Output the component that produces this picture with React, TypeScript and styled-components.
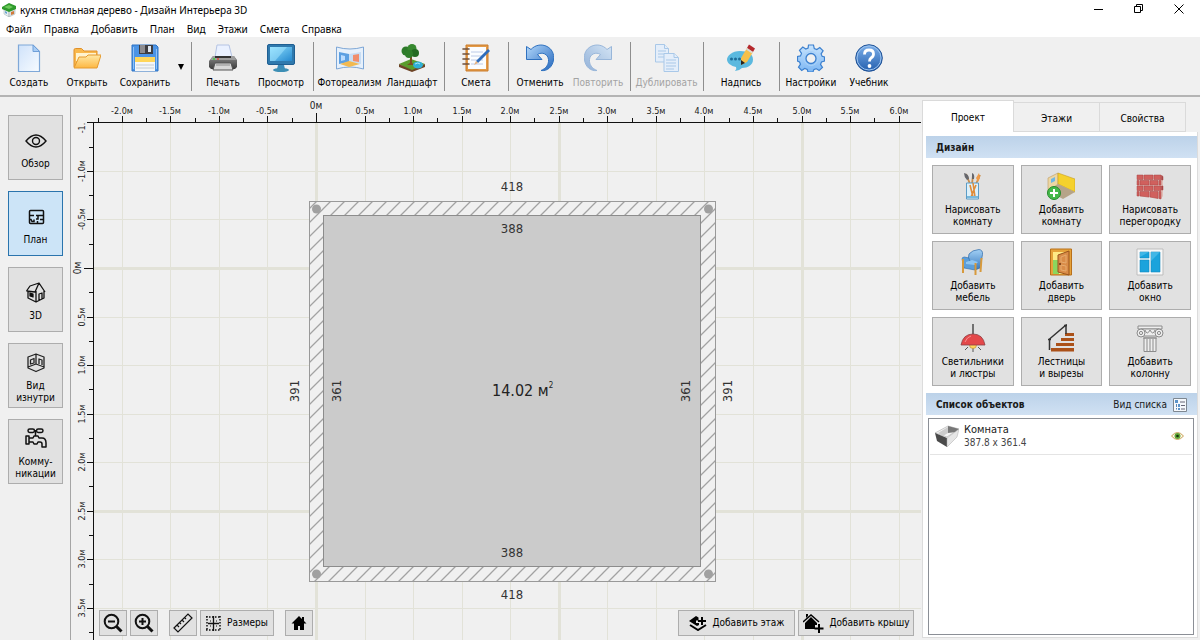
import React from "react";
import styled, { createGlobalStyle, css } from "styled-components";

const GlobalStyle = createGlobalStyle`
  *, *::before, *::after { box-sizing: border-box; }
  body { margin: 0; background: #f0f0f0; }
  button, input, select { font: inherit; color: inherit; }
`;

const uiFont = `"DejaVu Sans Condensed", Tahoma, "DejaVu Sans", sans-serif`;
const titleFont = `"Noto Sans", "Segoe UI", sans-serif`;

/* ---------- window frame ---------- */

const Window = styled.div`
  display: flex;
  flex-direction: column;
  min-height: 100vh;
  background: #f0f0f0;
  color: #1a1a1a;
  font-family: ${uiFont};
  font-size: 10px;
  line-height: 12px;
`;

const TitleBar = styled.header`
  display: flex;
  align-items: center;
  height: 20px;
  padding-left: 2px;
  gap: 4px;
  background: #fff;
  font-family: ${titleFont};
  color: #000;
`;

const Title = styled.h1`
  flex: 1;
  margin: 0;
  font-size: 10px;
  font-weight: 400;
`;

const WindowButton = styled.button`
  display: grid;
  place-items: center;
  width: 40px;
  height: 18px;
  padding: 0;
  border: 0;
  background: none;
`;

const WindowButtons = styled.div`
  display: flex;
  align-self: flex-start;
  padding-right: 1px;
`;

const MenuBar = styled.nav`
  display: flex;
  gap: 12px;
  height: 17px;
  padding: 0 6px;
  background: #fff;
  font-family: ${titleFont};
  font-size: 10px;
  line-height: 18px;
`;

const MenuItem = styled.button`
  padding: 0;
  border: 0;
  background: none;
  color: #000;
`;

/* ---------- main toolbar ---------- */

const Toolbar = styled.div`
  display: flex;
  height: 60px;
  padding: 5px 0 4px;
  border-bottom: 2px solid #b4b4b4;
`;

const toolWidths = { s: 58, m: 67, l: 70 };

const ToolButton = styled.button<{ $size: "s" | "m" | "l" }>`
  display: flex;
  flex-direction: column;
  align-items: center;
  gap: 5px;
  flex: none;
  width: ${(p) => toolWidths[p.$size]}px;
  padding: 2px 0 0;
  border: 0;
  background: none;
  color: #000;
  white-space: nowrap;
  &:disabled {
    color: #a3a3a3;
  }
`;

const SaveArrow = styled.button`
  display: grid;
  place-items: center;
  width: 14px;
  padding: 0;
  border: 0;
  background: none;
`;

const Separator = styled.span`
  flex: none;
  width: 1px;
  margin: 0 2px 0 3px;
  background: #8e8e8e;
`;

/* ---------- body ---------- */

const Body = styled.div`
  display: flex;
  flex: 1;
`;

const face = css`
  border: 1px solid #adadad;
  background: #e1e1e1;
  color: #000;
`;

const ViewBar = styled.nav`
  display: flex;
  flex-direction: column;
  gap: 11px;
  flex: none;
  width: 71px;
  padding: 18px 8px;
  border-right: 1px solid #a5a5a5;
`;

const ViewButton = styled.button<{ $active?: boolean }>`
  ${face}
  display: flex;
  flex-direction: column;
  align-items: center;
  justify-content: center;
  gap: 5px;
  width: 55px;
  height: 65px;
  padding: 3px 0 0;
  ${(p) =>
    p.$active &&
    css`
      border-color: #2a74ad;
      background: #cce4f7;
    `}
`;

const Workspace = styled.main`
  position: relative;
  display: flex;
  flex: 1;
  flex-direction: column;
  justify-content: flex-end;
  min-width: 0;
  overflow: hidden;
`;

const Plan = styled.svg`
  position: absolute;
  inset: 0;
  width: 100%;
  height: 100%;
  font-family: ${uiFont};
`;

const BottomBar = styled.div`
  position: relative;
  display: flex;
  gap: 3px;
  padding: 0 7px 4px 28px;
`;

const BottomButton = styled.button<{ $width: number }>`
  ${face}
  display: flex;
  align-items: center;
  justify-content: center;
  gap: 6px;
  width: ${(p) => p.$width}px;
  height: 26px;
  padding: 0;
  white-space: nowrap;
`;

const Gap = styled.span<{ $grow?: boolean }>`
  flex: ${(p) => (p.$grow ? "1" : "0 0 5px")};
`;

/* ---------- right panel ---------- */

const SidePanel = styled.aside`
  display: flex;
  flex-direction: column;
  flex: none;
  width: 279px;
  padding: 3px 2px 2px 1px;
`;

const Tabs = styled.div`
  display: flex;
  align-items: flex-end;
`;

const Tab = styled.button<{ $active?: boolean }>`
  width: 86px;
  height: 30px;
  padding: 3px 0 0;
  border: 1px solid #dadada;
  border-left: 0;
  background: #f0f0f0;
  color: #000;
  ${(p) =>
    p.$active &&
    css`
      width: 92px;
      height: 32px;
      border-left: 1px solid #dadada;
      border-bottom: 0;
      background: #fff;
    `}
`;

const TabPage = styled.div`
  display: flex;
  flex: 1;
  flex-direction: column;
  padding: 4px 0 2px 3px;
  border: 1px solid #dcdcdc;
  border-top: 0;
  background: #fff;
`;

const SectionHeader = styled.div`
  display: flex;
  align-items: center;
  justify-content: space-between;
  height: 22px;
  padding: 1px 10px 0;
  background: linear-gradient(#bcd2e9, #d0e1f3);
`;

const SectionTitle = styled.h2`
  margin: 0;
  font-size: 10px;
  font-weight: 700;
`;

const ListView = styled.button`
  display: flex;
  align-items: center;
  gap: 6px;
  padding: 0;
  border: 0;
  background: none;
`;

const DesignGrid = styled.div`
  display: grid;
  grid-template-columns: repeat(3, 1fr);
  gap: 7px;
  padding: 7px 6px 7px 6px;
`;

const DesignButton = styled.button`
  ${face}
  display: flex;
  flex-direction: column;
  align-items: center;
  gap: 4px;
  height: 69px;
  padding: 6px 0 0;
  line-height: 12px;
`;

const Lines = styled.span`
  text-align: center;
  white-space: pre-line;
`;

const ObjectList = styled.ul`
  flex: 1;
  margin: 3px 3px 0 2px;
  padding: 0 1px;
  list-style: none;
  border: 1px solid #8b8f96;
  background: #fff;
`;

const ObjectItem = styled.li`
  display: flex;
  align-items: center;
  gap: 5px;
  height: 36px;
  padding: 0 8px 1px 5px;
  border-bottom: 1px solid #e4e4e4;
`;

const ObjectText = styled.div`
  flex: 1;
  line-height: 13px;
`;

const ObjectName = styled.div`
  font-size: 11px;
`;

const ObjectSize = styled.div`
  color: #444;
`;

/* ---------- icons ---------- */

const Svg = ({ size = 28, h, children }: { size?: number; h?: number; children: React.ReactNode }) => (
  <svg width={size} height={h ?? size} viewBox={`0 0 ${size} ${h ?? size}`} fill="none" aria-hidden="true">
    {children}
  </svg>
);

const Grad = ({ id, from, to, x2 = 0, y2 = 1 }: { id: string; from: string; to: string; x2?: number; y2?: number }) => (
  <linearGradient id={id} x1="0" y1="0" x2={x2} y2={y2}>
    <stop offset="0" stopColor={from} />
    <stop offset="1" stopColor={to} />
  </linearGradient>
);

const LogoIcon = () => (
  <Svg size={14}>
    <path d="M2 6l5 2v6l-5-3z" fill="#e8eef2" stroke="#9aa" strokeWidth=".5" />
    <path d="M7 8l6-2v5l-6 3z" fill="#d9dfe4" stroke="#9aa" strokeWidth=".5" />
    <path d="M0 4l7-4 7 3v3L7 9 0 6z" fill="#2f9a2c" />
    <path d="M2 4l5-2 4 2-4 2z" fill="#6cc95a" />
    <path d="M9 9l3-1v3l-3 1z" fill="#d27a3a" />
    <path d="M3 8l2 1v2l-2-1z" fill="#6aa5cf" />
  </Svg>
);

const NewIcon = () => (
  <Svg>
    <defs><Grad id="page" from="#cfe2fa" to="#f7fbff" x2={1} /></defs>
    <path d="M3.500 1h14.500l6.500 6.500V27.500h-21z" fill="url(#page)" stroke="#7fa8d8" strokeWidth="1.200" />
    <path d="M18 1v6.500h6.500z" fill="#a9cdf5" stroke="#6f9fd8" />
  </Svg>
);

const OpenIcon = () => (
  <Svg>
    <defs><Grad id="folder" from="#ffe9a6" to="#fdb742" /></defs>
    <path d="M1 23V6q0-1.500 1.500-1.500h6L11 7h13v5" fill="#f9b84c" stroke="#e0902a" />
    <path d="M3 9h20v8H3z" fill="#fff3cf" />
    <path d="M1 24L6 13h7l2-2h13l-4 13z" fill="url(#folder)" stroke="#e59a2e" />
  </Svg>
);

const SaveIcon = () => (
  <Svg>
    <path d="M1 1h24l2 2v24H1z" fill="#4b94e6" stroke="#2d72c4" />
    <path d="M8 1h14v9H8z" fill="#3e3e42" />
    <path d="M9 1h5v8H9z" fill="#8c8c90" />
    <path d="M17 2h3v6h-3z" fill="#dfe7f0" />
    <path d="M4 13h20v14H4z" fill="#f4f6f8" />
    <path d="M4 13h20v5H4z" fill="#ffd65a" />
    <path d="M5 21h18M5 24h18" stroke="#c4ccd4" />
    <path d="M2.500 3v22M25.500 5v20" stroke="#8fc1f7" />
  </Svg>
);

const PrintIcon = () => (
  <Svg>
    <defs><Grad id="prn" from="#8a8a8a" to="#3d3d3d" /></defs>
    <path d="M6 13L8 1h12l3 12z" fill="#eaf1ff" stroke="#b5c4e4" />
    <path d="M4 12h21l3 4v7l-2 2H2l-2-2v-6z" fill="url(#prn)" />
    <path d="M4 12h21l2 4H1z" fill="#9d9d9d" />
    <path d="M6 12h16v2H6z" fill="#333" />
    <path d="M6 19h16l2 7H4z" fill="#d8d8d8" stroke="#555" />
    <path d="M7 21h14" stroke="#8d8d8d" />
    <circle cx="5" cy="15" r="1" fill="#3ed23e" /><circle cx="9" cy="15" r="1" fill="#e14a3c" />
  </Svg>
);

const MonitorIcon = () => (
  <Svg>
    <defs><Grad id="screen" from="#8fe0ff" to="#2589cf" x2={1} /></defs>
    <rect x=".5" y=".5" width="27" height="20" rx="1.500" fill="#2f79ad" stroke="#1f5f92" />
    <path d="M3 3h22v14H3z" fill="url(#screen)" />
    <path d="M3 3h17L8 17H3z" fill="#a8e8ff" opacity=".5" />
    <path d="M11 21h6l1 4h-8z" fill="#3b8cbb" />
    <ellipse cx="14" cy="26" rx="8" ry="2" fill="#3d8fb5" />
  </Svg>
);

const PhotoIcon = () => (
  <Svg>
    <path d="M.500 3q13.500 4 27 0v22q-13.500-4-27 0z" fill="#e6f0fb" stroke="#7ea7d6" />
    <path d="M3 8l10 2v8L3 20z" fill="#5b9fe2" />
    <path d="M5 11l4 1v4l-4 1z" fill="#b9dbff" />
    <path d="M13 10l12-2v12l-12-2z" fill="#c7ddf4" />
    <path d="M17 11l6-1v8l-6-1z" fill="#f08d6c" />
    <path d="M4 20l9-3 11 3-11 3z" fill="#f2b950" />
  </Svg>
);

const TreeIcon = () => (
  <Svg>
    <path d="M1 20l12-5 14 5-13 7z" fill="#5a9c2b" />
    <path d="M1 20l13 6v2L1 23zM27 20l-13 6v2l13-5z" fill="#6d4426" />
    <path d="M10 9l2 3v7l-3 2h8l-3-2v-7l2-4z" fill="#7a4b24" />
    <circle cx="8" cy="7" r="4.500" fill="#2d7a2a" /><circle cx="14" cy="4.500" r="4.500" fill="#37892f" />
    <circle cx="17" cy="9" r="4" fill="#256b24" /><circle cx="11" cy="10" r="4" fill="#2e7d2a" />
    <ellipse cx="20" cy="21" rx="5" ry="3.500" fill="#2fb0d8" /><path d="M17 20q3-2 5 0" stroke="#a5e5f7" />
  </Svg>
);

const EstimateIcon = () => (
  <Svg>
    <path d="M4 1h22v26H4z" fill="#e39a48" stroke="#cb7c2a" />
    <path d="M6 3h18v22H6z" fill="#fbfdff" />
    <path d="M9 8h12M9 12h12M9 16h12M9 20h12" stroke="#bccbe8" />
    <path d="M1 5h6M1 10h6M1 15h6M1 20h6" stroke="#70503a" strokeWidth="1.600" strokeLinecap="round" />
    <path d="M26 5l2 2-12 12-2-2z" fill="#2f6dbb" /><path d="M14 17l2 2-4 2z" fill="#e9b27c" />
  </Svg>
);

const UndoIcon = ({ mirror }: { mirror?: boolean }) => (
  <Svg>
    <defs><Grad id="undo" from="#b3d8fb" to="#2467bd" x2={1} /></defs>
    <g transform={mirror ? "translate(28 0) scale(-1 1)" : undefined} opacity={mirror ? 0.45 : 1}>
      <path
        d="M.5 2.500L5 5.500C9 1 15 0 20 2c6 2.500 8.500 8 7.500 14C26.500 23 21 27.500 15 26.500c5-2 8-6 7.500-11C22 10 16 7.500 11.500 10.500L16 15.500H.5z"
        fill="url(#undo)" stroke="#2f71bf" strokeLinejoin="round"
      />
    </g>
  </Svg>
);

const CopyIcon = () => (
  <Svg>
    <g fill="#e4eefa" stroke="#a9c8e8">
      <path d="M2.500.500h9l4 4V18h-13z" /><path d="M11.500.500v4h4" /><path d="M5 7h8M5 10h8M5 13h6" />
      <path d="M11 9.500h10l4.500 4V27.500H11z" /><path d="M21 9.500v4h4" /><path d="M13 16h10M13 19h10M13 22h10M13 25h8" />
    </g>
  </Svg>
);

const NoteIcon = () => (
  <Svg>
    <path d="M13 7c8 0 13 3 13 8.500S21 24 15 24q-3 3-7 3 2-2 1-4C4 22 0 19 0 15.500S5 7 13 7z" fill="#5bb9df" />
    <circle cx="4.500" cy="15" r="1.500" fill="#1d6c98" /><circle cx="8.500" cy="15" r="1.500" fill="#1d6c98" /><circle cx="12.500" cy="15" r="1.500" fill="#1d6c98" />
    <path d="M20 4l6 4-6 10-6 3v-7z" fill="#f6c04a" /><path d="M20 4l2-3.500 6 4L26 8z" fill="#b5292d" />
    <path d="M20 4l6 4-1 1.500-6-4z" fill="#d9d9d9" /><path d="M14 16v5l4-2z" fill="#222" />
  </Svg>
);

const GearIcon = () => (
  <Svg>
    <defs><Grad id="gear" from="#c8e4fd" to="#7cb6f3" /></defs>
    <path
      d="M11.500 1h5l.8 3.600 2.500 1 3-2 3.300 3.300-2 3 1 2.400L27.500 13v4l-3 1-1 2.400 2 3-3.400 3.200-3-2-2.300 1-.8 2.400h-5l-.8-2.600-2.500-1-3 2-3.200-3.200 2-3-1-2.300L.5 17v-4.500l3-.6 1-2.500-2-3L5.800 3l3 2 2.300-1z"
      fill="url(#gear)" stroke="#3c80cf" strokeWidth="1.200"
    />
    <circle cx="14" cy="14.500" r="7" stroke="#a9d1f8" /><circle cx="14" cy="14.500" r="5" fill="#f0f0f0" stroke="#3c80cf" strokeWidth="1.300" />
  </Svg>
);

const HelpIcon = () => (
  <Svg>
    <defs><Grad id="help" from="#7db0ea" to="#245fae" /></defs>
    <circle cx="14" cy="14" r="13.300" fill="url(#help)" stroke="#205296" />
    <circle cx="14" cy="14" r="12" stroke="#9cc3ee" />
    <path d="M9.500 10.500q0-4.500 4.500-4.500t4.500 4q0 2.500-2.500 4-1.500 1-1.500 3.500" stroke="#fff" strokeWidth="2.800" />
    <circle cx="14.500" cy="22" r="1.900" fill="#fff" />
  </Svg>
);

const EyeOutline = () => (
  <Svg size={24}>
    <g stroke="#111" strokeWidth="1.400">
      <path d="M2 12q10-12 20 0-10 12-20 0z" /><circle cx="12" cy="12" r="3.500" />
    </g>
  </Svg>
);

const PlanIcon = () => (
  <Svg size={24}>
    <g stroke="#111" strokeWidth="1.500">
      <rect x="5.500" y="5.500" width="14" height="13" rx="1" />
      <path d="M5 10.500h5M12 10.500h7M14 10v4h-2M5 14.500h2l1 2h2v-2M13.500 16v3M16 14.500h3" />
    </g>
  </Svg>
);

const HouseIcon = () => (
  <Svg size={24}>
    <g stroke="#111" strokeWidth="1.300" strokeLinejoin="round">
      <path d="M2.500 10L6 5l9-3 6 9M15 2l-4 9-8.500-1M4 10v7l8 4V10M12 21l8-4V10M15 19v-6l3-1v6" />
      <path d="M6 12v3l3 1v-3z" fill="#111" />
    </g>
  </Svg>
);

const InsideIcon = () => (
  <Svg size={24}>
    <g stroke="#222" strokeWidth="1.300" strokeLinejoin="round">
      <path d="M4 6l8-3 8 3v11l-8 3.500L4 17zM4 16l8-3 8 3M12 3v10M6.500 9l3.500-1.500v4.500l-3.500 1zM15 13V8l3 1v5" />
    </g>
  </Svg>
);

const TapIcon = () => (
  <Svg size={24}>
    <g stroke="#111" strokeWidth="1.500" strokeLinejoin="round">
      <rect x="4" y="2" width="6.500" height="3.500" rx="1.700" /><rect x="12.500" y="2" width="6.500" height="3.500" rx="1.700" />
      <path d="M11.500 3v6M2 9h3v8H2zM5 11h4l1-2h4l1 2h3q4 0 4 5v4h-4v-3q0-2-2-2h-2l-1 2h-3l-1-2H5" />
    </g>
  </Svg>
);

const ZoomIcon = ({ plus }: { plus?: boolean }) => (
  <Svg size={20}>
    <g stroke="#111">
      <circle cx="8.500" cy="8.500" r="6.800" strokeWidth="2" /><path d="M13.500 13.500l5 5" strokeWidth="3" />
      <path d={plus ? "M5 8.500h7M8.500 5v7" : "M5 8.500h7"} strokeWidth="2" />
    </g>
  </Svg>
);

const RulerIcon = () => (
  <Svg size={20}>
    <path d="M1 15L15 1l4 4L5 19zM4 12l2 2M6.500 9.500l1.500 1.500M9 7l2 2M11.500 4.500L13 6" stroke="#111" strokeWidth="1.200" />
  </Svg>
);

const SizesIcon = () => (
  <Svg size={15}>
    <path d="M0 1h15M0 14h15M1 0v15M14 0v15" stroke="#111" strokeWidth="1.500" strokeDasharray="1.500 1.500" />
    <path d="M7.500 0v15M2 7.500h11" stroke="#111" strokeWidth="1.300" />
    <path d="M4 5h7M4 10h7" stroke="#111" strokeDasharray="1 2" />
  </Svg>
);

const HomeIcon = () => (
  <Svg size={16}>
    <path d="M8 1L.5 8.500H3V15h4v-4h2v4h4V8.500h2.500L13 6V2h-2v2z" fill="#000" />
  </Svg>
);

const FloorIcon = () => (
  <Svg size={18} h={16}>
    <path d="M0 6l7-5 2.500 1.500v3H7v2.500h3v2L8 11z" fill="#000" />
    <path d="M13 2v8M9 6h8" stroke="#000" strokeWidth="2" /><path d="M1 10l8 5 8-5" stroke="#000" strokeWidth="2" />
  </Svg>
);

const RoofIcon = () => (
  <Svg size={21} h={20}>
    <path d="M0 9l8-7 8 7" stroke="#000" strokeWidth="1.500" /><path d="M3 5V1h2v2z" fill="#000" />
    <path d="M8 4l6 6v2h-2v4H2v-6z" fill="#000" /><path d="M16 11v9M11.500 15.500h9" stroke="#000" strokeWidth="2" />
  </Svg>
);

const BrushesIcon = () => (
  <Svg>
    <path d="M11 12L7 2M13 12l1-9M17 12l4-9" stroke="#c98c4a" strokeWidth="1.800" />
    <path d="M5 1q5 1 5 6l-2 1q-3-3-3-7zM13 1q3 1 2 6h-2z" fill="#65666b" /><path d="M17 6l3-5 1 5-2 4z" fill="#ef9a48" />
    <path d="M7.500 11h12v16h-12z" fill="#dcf0fa" stroke="#5b9cc6" />
    <path d="M11 13l3 12M17 13l-5 12M14 11l2 14" stroke="#df8c3a" strokeWidth="1.600" />
    <path d="M8 24h11v2H8z" fill="#79b9dc" />
  </Svg>
);

const AddRoomIcon = () => (
  <Svg>
    <path d="M1 6l10-5v11L1 20z" fill="#ecd6a4" stroke="#bf9a5b" strokeWidth=".6" />
    <path d="M11 1l17 6v13l-17-8z" fill="#f5d12d" stroke="#c89e1f" strokeWidth=".6" />
    <path d="M11 12l17 8-12 7L1 19z" fill="#b6a488" /><path d="M4 7l4-2v4l-4 2z" fill="#6fb6e4" />
    <circle cx="7" cy="21" r="6.500" fill="#45b94a" stroke="#248b2c" /><path d="M7 17v8M3 21h8" stroke="#fff" strokeWidth="2" />
  </Svg>
);

const BrickIcon = () => (
  <Svg>
    <path d="M1 3h24v24L1 24zM25 3l2 1v20l-2 3z" fill="#e0bdb6" />
    <g fill="#d0605d" stroke="#a94544" strokeWidth=".5">
      <path d="M1 3h6v4.500H1zM8 3h9v4.500H8zM18 3h7v4.500h-7z" />
      <path d="M1 8.500h2v4.500H1zM4 8.500h9v4.500H4zM14 8.500h8v4.500h-8zM23 8.500h2v4.500h-2z" />
      <path d="M1 14h6v4.500H1zM8 14h9v4.500H8zM18 14h7v4.500h-7z" />
      <path d="M1 19.500h2V24H1zM4 19.500h9V25l-9-1zM14 19.500h8v7l-8-1.500zM23 19.500h2V27l-2-.5z" />
      <path d="M25.500 3.500l1.500 1v3.500l-1.500 0zM25.500 14h1.500v4h-1.500z" fill="#a84545" />
    </g>
  </Svg>
);

const ChairIcon = () => (
  <Svg>
    <defs><Grad id="chair" from="#a2d0f5" to="#3577bd" /></defs>
    <path d="M10 6q3-4 10-4.500 4 .5 3.500 5L21 20l-5 2-2-8-5-2z" fill="url(#chair)" stroke="#2d69a8" strokeWidth=".7" />
    <path d="M3 11q0-2 2.500-2L10 10l1 5 5 1v6L5 20z" fill="#5c9fdb" stroke="#2d69a8" strokeWidth=".6" />
    <path d="M7 14l6-2 6 2-3 3-9-1z" fill="#8fc6f2" />
    <path d="M4 11v14M16.500 15v12M22.500 10l-1 14" stroke="#d79a3d" strokeWidth="2" />
  </Svg>
);

const DoorIcon = () => (
  <Svg>
    <path d="M3.500 1h21v26h-21z" fill="#e6a23a" stroke="#b8701b" /><path d="M6 4h15v22H6z" fill="#ffe985" />
    <path d="M6 12h6v14H6z" fill="#8bd65e" /><path d="M11 7l11-4v24l-11-3z" fill="#d98c48" stroke="#99531d" />
    <path d="M14 9l5-2v8l-5-1zM14 17l5 1v5l-5-1z" stroke="#e6ab6e" /><circle cx="13" cy="16" r="1" fill="#663312" />
  </Svg>
);

const WindowIcon = () => (
  <Svg>
    <path d="M1 1h26v26H1z" fill="#f8f8f8" stroke="#bdbdbd" />
    <path d="M4 4h9v6H4zM4 12h9v12H4zM15 4h9v20h-9z" fill="#1ba3dc" stroke="#158cc0" strokeWidth=".6" />
    <path d="M4 4h9L4 9zM15 4h9l-9 9z" fill="#5cc5ef" opacity=".6" />
  </Svg>
);

const LampIcon = () => (
  <Svg>
    <path d="M14 0v10" stroke="#555" strokeWidth="1.600" />
    <path d="M14 24v4M9 23l-3 3M19 23l3 3" stroke="#555" strokeWidth="1" />
    <circle cx="14" cy="21" r="3.500" fill="#ffd65c" stroke="#b58a36" strokeWidth=".6" />
    <path d="M2 21q2-11 12-11t12 11z" fill="#e4484a" stroke="#8c4044" strokeWidth=".8" /><path d="M6 18q2-5 6-6" stroke="#f49090" />
  </Svg>
);

const StairsIcon = () => (
  <Svg>
    <path d="M18 9h9v3h-9zM14 14h13v3H14zM9 19h18v3H9zM4 24h23v3.500H4z" fill="#ab5119" />
    <path d="M2.500 26V15L19 1v9M1 15.500h3M17 1.500h3" stroke="#333" strokeWidth="1.500" />
  </Svg>
);

const ColumnIcon = () => (
  <Svg>
    <g stroke="#8b8b8b" fill="#eee">
      <path d="M2 2h24v3H2z" /><path d="M8 14h12v13.500H8z" /><path d="M5 5h18v7H5z" />
      <circle cx="5" cy="9" r="4" /><circle cx="5" cy="9" r="1.600" /><circle cx="23" cy="9" r="4" /><circle cx="23" cy="9" r="1.600" />
      <path d="M9 6q2 6 5 0 3 6 5 0M7 14h14M11 15v12M14 15v12M17 15v12" />
    </g>
  </Svg>
);

const ListIcon = () => (
  <Svg size={14}>
    <path d="M.5.5h13v13H.5z" fill="#f5f8fc" stroke="#7d8791" />
    <path d="M3.500 4v7M3 7.500h3M3 11h3" stroke="#5b87b5" strokeDasharray="1 1" />
    <path d="M7 4h5M8 7.500h4M8 11h4" stroke="#667" /><path d="M2 2h3v3H2zM5 6h2v3H5zM5 10h2v2H5z" fill="#5b93c9" />
  </Svg>
);

const RoomIcon = () => (
  <Svg size={24}>
    <path d="M0 9l13-7 11 3-12 8z" fill="#f4f4f4" stroke="#999" strokeWidth=".5" />
    <path d="M13 2v7l8-1 3-3z" fill="#777" /><path d="M3 9l10-6v6l-5 3z" fill="#ccc" />
    <path d="M0 9l12 5v9L2 17z" fill="#4a4a4a" /><path d="M12 14L24 5l-2 8-10 10z" fill="#e6e6e6" stroke="#aaa" strokeWidth=".5" />
  </Svg>
);

const EyeIcon = () => (
  <Svg size={13} h={10}>
    <path d="M.500 5q6-7 12 0-6 7-12 0z" fill="#fff9e8" stroke="#c79f56" />
    <circle cx="6.500" cy="5" r="3" fill="#5fa536" /><circle cx="6.500" cy="5" r="1.300" fill="#16330c" />
  </Svg>
);

/* ---------- plan drawing ---------- */

const METRE = 97.1;
const ZERO_X = 245;
const ZERO_Y = 171;
const RULER_X = 22;
const RULER_Y = 25;

const posX = (m: number) => Math.round(ZERO_X + m * METRE);
const posY = (m: number) => Math.round(ZERO_Y + m * METRE);

/* Quarter-metre marks from `from` to `to`. */
const marks = (from: number, to: number) =>
  Array.from({ length: Math.round((to - from) * 4) + 1 }, (_, i) => from + i / 4);

const isHalf = (m: number) => Number.isInteger(m * 2);
const isBold = (m: number) => Number.isInteger(m / 2.5);
const label = (m: number) => (m === 0 ? "0м" : `${m.toFixed(1)}м`);
const tick = (m: number) => (m === 0 ? 9 : isHalf(m) ? 6 : 4);

const xMarks = marks(-2.25, 6);
const yMarks = marks(-1.5, 3.75);

const wall = { left: 238, top: 104, right: 644, bottom: 484, thick: 15 };
const corners = [
  [245, 112],
  [637, 112],
  [245, 477],
  [637, 477],
];

const FloorPlan = () => (
  <Plan role="img" aria-label="План комнаты">
    <defs>
      <pattern id="hatch" width="14" height="14" patternUnits="userSpaceOnUse">
        <path d="M-1 15L15-1M-1 1L1-1M13 15L15 13" stroke="#a2a2a2" strokeWidth="1.300" />
      </pattern>
    </defs>

    <g stroke="#e2e2d8">
      {xMarks.filter(isHalf).map((m) => (
        <line key={m} x1={posX(m) + 0.5} x2={posX(m) + 0.5} y1={RULER_Y} y2="100%" strokeWidth={isBold(m) ? 3 : 1} />
      ))}
      {yMarks.filter(isHalf).map((m) => (
        <line key={m} y1={posY(m) + 0.5} y2={posY(m) + 0.5} x1={RULER_X} x2="100%" strokeWidth={isBold(m) ? 3 : 1} />
      ))}
    </g>

    <g stroke="#111" shapeRendering="crispEdges">
      <line x1={RULER_X} x2="100%" y1={RULER_Y + 0.5} y2={RULER_Y + 0.5} />
      <line x1={RULER_X + 0.5} x2={RULER_X + 0.5} y1={RULER_Y} y2="100%" />
      {xMarks.map((m) => (
        <line key={m} x1={posX(m) + 0.5} x2={posX(m) + 0.5} y1={RULER_Y - tick(m)} y2={RULER_Y} />
      ))}
      {yMarks.map((m) => (
        <line key={m} y1={posY(m) + 0.5} y2={posY(m) + 0.5} x1={RULER_X - tick(m)} x2={RULER_X} />
      ))}
    </g>

    <g fill="#222" textAnchor="middle" fontSize="9">
      {xMarks.filter(isHalf).map((m) => (
        <text key={m} x={posX(m)} y={m === 0 ? 12 : 17} fontSize={m === 0 ? 10 : 9}>
          {label(m)}
        </text>
      ))}
      <text transform={`translate(14 ${RULER_Y + 6}) rotate(-90)`}>-1.</text>
      {yMarks
        .filter((m) => isHalf(m) && m > -1.5)
        .map((m) => (
          <text
            key={m}
            transform={`translate(${m === 0 ? 10 : 14} ${posY(m)}) rotate(-90)`}
            fontSize={m === 0 ? 10 : 9}
          >
            {label(m)}
          </text>
        ))}
    </g>

    <rect x={wall.left} y={wall.top} width={wall.right - wall.left} height={wall.bottom - wall.top} fill="#f0f0f0" />
    <rect
      x={wall.left + 0.5}
      y={wall.top + 0.5}
      width={wall.right - wall.left}
      height={wall.bottom - wall.top}
      fill="url(#hatch)"
      stroke="#999"
    />
    <rect
      x={wall.left + wall.thick - 0.5}
      y={wall.top + wall.thick - 0.5}
      width={wall.right - wall.left - 2 * wall.thick + 1}
      height={wall.bottom - wall.top - 2 * wall.thick + 1}
      fill="#cbcbcb"
      stroke="#8c8c8c"
    />
    {corners.map(([x, y]) => (
      <circle key={`${x}-${y}`} cx={x + 0.5} cy={y} r="4.500" fill="#a0a0a0" />
    ))}

    <g fill="#333" textAnchor="middle" fontSize="13">
      <text x="441" y="94">418</text>
      <text x="441" y="136">388</text>
      <text x="441" y="460">388</text>
      <text x="441" y="502">418</text>
      <text transform="translate(228 294) rotate(-90)">391</text>
      <text transform="translate(270 294) rotate(-90)">361</text>
      <text transform="translate(619 294) rotate(-90)">361</text>
      <text transform="translate(661 294) rotate(-90)">391</text>
    </g>
    <text x="421" y="299" fill="#222" fontSize="16">
      14.02 м<tspan dy="-8" fontSize="8">2</tspan>
    </text>
  </Plan>
);

/* ---------- data ---------- */

const menu = ["Файл", "Правка", "Добавить", "План", "Вид", "Этажи", "Смета", "Справка"];

type Tool = { label: string; icon: React.ReactNode; size?: "m" | "l"; disabled?: boolean; arrow?: boolean };

const toolGroups: Tool[][] = [
  [
    { label: "Создать", icon: <NewIcon /> },
    { label: "Открыть", icon: <OpenIcon /> },
    { label: "Сохранить", icon: <SaveIcon />, arrow: true },
  ],
  [
    { label: "Печать", icon: <PrintIcon /> },
    { label: "Просмотр", icon: <MonitorIcon /> },
  ],
  [
    { label: "Фотореализм", icon: <PhotoIcon />, size: "m" },
    { label: "Ландшафт", icon: <TreeIcon /> },
  ],
  [{ label: "Смета", icon: <EstimateIcon /> }],
  [
    { label: "Отменить", icon: <UndoIcon /> },
    { label: "Повторить", icon: <UndoIcon mirror />, disabled: true },
  ],
  [{ label: "Дублировать", icon: <CopyIcon />, size: "m", disabled: true }],
  [{ label: "Надпись", icon: <NoteIcon />, size: "l" }],
  [
    { label: "Настройки", icon: <GearIcon /> },
    { label: "Учебник", icon: <HelpIcon /> },
  ],
];

const views = [
  { label: "Обзор", icon: <EyeOutline /> },
  { label: "План", icon: <PlanIcon />, active: true },
  { label: "3D", icon: <HouseIcon /> },
  { label: "Вид\nизнутри", icon: <InsideIcon /> },
  { label: "Комму-\nникации", icon: <TapIcon /> },
];

const designs = [
  { label: "Нарисовать\nкомнату", icon: <BrushesIcon /> },
  { label: "Добавить\nкомнату", icon: <AddRoomIcon /> },
  { label: "Нарисовать\nперегородку", icon: <BrickIcon /> },
  { label: "Добавить\nмебель", icon: <ChairIcon /> },
  { label: "Добавить\nдверь", icon: <DoorIcon /> },
  { label: "Добавить\nокно", icon: <WindowIcon /> },
  { label: "Светильники\nи люстры", icon: <LampIcon /> },
  { label: "Лестницы\nи вырезы", icon: <StairsIcon /> },
  { label: "Добавить\nколонну", icon: <ColumnIcon /> },
];

export default function App() {
  return (
    <Window>
      <GlobalStyle />
      <TitleBar>
        <LogoIcon />
        <Title>кухня стильная дерево - Дизайн Интерьера 3D</Title>
        <WindowButtons>
          <WindowButton aria-label="Свернуть">
            <Svg size={10}><path d="M0 5.500h9" stroke="#000" /></Svg>
          </WindowButton>
          <WindowButton aria-label="Восстановить">
            <Svg size={10}><path d="M.5 2.500h6v6h-6zM2.500 2.500v-2h6v6h-2" stroke="#000" /></Svg>
          </WindowButton>
          <WindowButton aria-label="Закрыть">
            <Svg size={10}><path d="M.5.500l9 9M9.500.500l-9 9" stroke="#000" /></Svg>
          </WindowButton>
        </WindowButtons>
      </TitleBar>
      <MenuBar>
        {menu.map((m) => (
          <MenuItem key={m}>{m}</MenuItem>
        ))}
      </MenuBar>

      <Toolbar role="toolbar">
        {toolGroups.map((group, i) => (
          <React.Fragment key={group[0].label}>
            {i > 0 && <Separator />}
            {group.map((t) => (
              <React.Fragment key={t.label}>
                <ToolButton $size={t.size ?? "s"} disabled={t.disabled}>
                  {t.icon}
                  {t.label}
                </ToolButton>
                {t.arrow && (
                  <SaveArrow aria-label="Варианты сохранения">
                    <Svg size={6}><path d="M0 0h6L3 6z" fill="#000" /></Svg>
                  </SaveArrow>
                )}
              </React.Fragment>
            ))}
          </React.Fragment>
        ))}
      </Toolbar>

      <Body>
        <ViewBar>
          {views.map((v) => (
            <ViewButton key={v.label} $active={v.active} aria-pressed={!!v.active}>
              {v.icon}
              <Lines>{v.label}</Lines>
            </ViewButton>
          ))}
        </ViewBar>

        <Workspace>
          <FloorPlan />
          <BottomBar>
            <BottomButton $width={28} aria-label="Уменьшить"><ZoomIcon /></BottomButton>
            <BottomButton $width={28} aria-label="Увеличить"><ZoomIcon plus /></BottomButton>
            <Gap />
            <BottomButton $width={28} aria-label="Линейка"><RulerIcon /></BottomButton>
            <BottomButton $width={74}><SizesIcon />Размеры</BottomButton>
            <Gap />
            <BottomButton $width={28} aria-label="Домой"><HomeIcon /></BottomButton>
            <Gap $grow />
            <BottomButton $width={117}><FloorIcon />Добавить этаж</BottomButton>
            <BottomButton $width={116}><RoofIcon />Добавить крышу</BottomButton>
          </BottomBar>
        </Workspace>

        <SidePanel>
          <Tabs role="tablist">
            <Tab role="tab" aria-selected $active>Проект</Tab>
            <Tab role="tab" aria-selected={false}>Этажи</Tab>
            <Tab role="tab" aria-selected={false}>Свойства</Tab>
          </Tabs>
          <TabPage role="tabpanel">
            <SectionHeader>
              <SectionTitle>Дизайн</SectionTitle>
            </SectionHeader>
            <DesignGrid>
              {designs.map((d) => (
                <DesignButton key={d.label}>
                  {d.icon}
                  <Lines>{d.label}</Lines>
                </DesignButton>
              ))}
            </DesignGrid>
            <SectionHeader>
              <SectionTitle>Список объектов</SectionTitle>
              <ListView>
                Вид списка
                <ListIcon />
              </ListView>
            </SectionHeader>
            <ObjectList>
              <ObjectItem>
                <RoomIcon />
                <ObjectText>
                  <ObjectName>Комната</ObjectName>
                  <ObjectSize>387.8 x 361.4</ObjectSize>
                </ObjectText>
                <EyeIcon />
              </ObjectItem>
            </ObjectList>
          </TabPage>
        </SidePanel>
      </Body>
    </Window>
  );
}
